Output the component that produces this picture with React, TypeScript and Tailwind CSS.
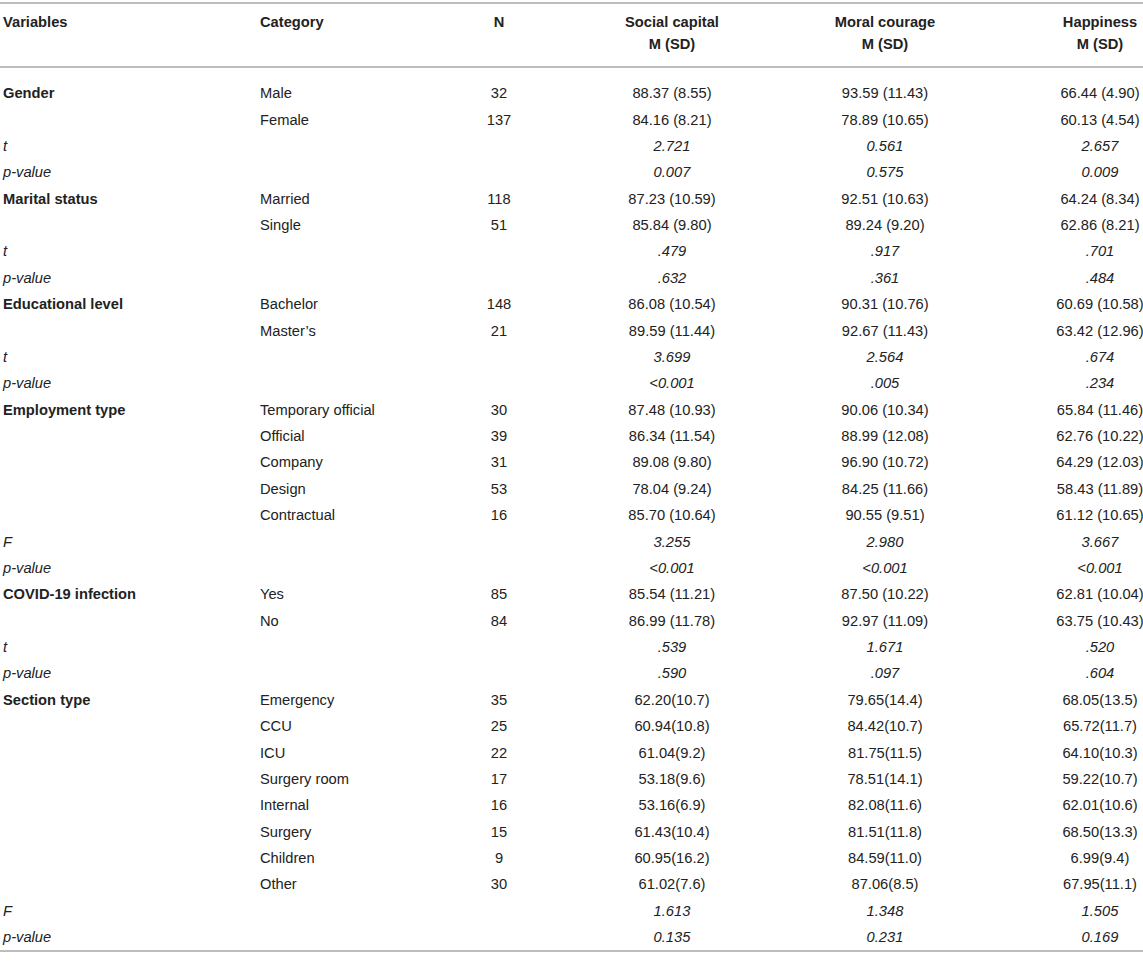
const rows: {
  v?: string
  c?: string
  n?: string
  a: string
  b: string
  h: string
  stat?: boolean
}[] = [
  { v: 'Gender', c: 'Male', n: '32', a: '88.37 (8.55)', b: '93.59 (11.43)', h: '66.44 (4.90)' },
  { c: 'Female', n: '137', a: '84.16 (8.21)', b: '78.89 (10.65)', h: '60.13 (4.54)' },
  { v: 't', stat: true, a: '2.721', b: '0.561', h: '2.657' },
  { v: 'p-value', stat: true, a: '0.007', b: '0.575', h: '0.009' },
  { v: 'Marital status', c: 'Married', n: '118', a: '87.23 (10.59)', b: '92.51 (10.63)', h: '64.24 (8.34)' },
  { c: 'Single', n: '51', a: '85.84 (9.80)', b: '89.24 (9.20)', h: '62.86 (8.21)' },
  { v: 't', stat: true, a: '.479', b: '.917', h: '.701' },
  { v: 'p-value', stat: true, a: '.632', b: '.361', h: '.484' },
  { v: 'Educational level', c: 'Bachelor', n: '148', a: '86.08 (10.54)', b: '90.31 (10.76)', h: '60.69 (10.58)' },
  { c: 'Master’s', n: '21', a: '89.59 (11.44)', b: '92.67 (11.43)', h: '63.42 (12.96)' },
  { v: 't', stat: true, a: '3.699', b: '2.564', h: '.674' },
  { v: 'p-value', stat: true, a: '<0.001', b: '.005', h: '.234' },
  { v: 'Employment type', c: 'Temporary official', n: '30', a: '87.48 (10.93)', b: '90.06 (10.34)', h: '65.84 (11.46)' },
  { c: 'Official', n: '39', a: '86.34 (11.54)', b: '88.99 (12.08)', h: '62.76 (10.22)' },
  { c: 'Company', n: '31', a: '89.08 (9.80)', b: '96.90 (10.72)', h: '64.29 (12.03)' },
  { c: 'Design', n: '53', a: '78.04 (9.24)', b: '84.25 (11.66)', h: '58.43 (11.89)' },
  { c: 'Contractual', n: '16', a: '85.70 (10.64)', b: '90.55 (9.51)', h: '61.12 (10.65)' },
  { v: 'F', stat: true, a: '3.255', b: '2.980', h: '3.667' },
  { v: 'p-value', stat: true, a: '<0.001', b: '<0.001', h: '<0.001' },
  { v: 'COVID-19 infection', c: 'Yes', n: '85', a: '85.54 (11.21)', b: '87.50 (10.22)', h: '62.81 (10.04)' },
  { c: 'No', n: '84', a: '86.99 (11.78)', b: '92.97 (11.09)', h: '63.75 (10.43)' },
  { v: 't', stat: true, a: '.539', b: '1.671', h: '.520' },
  { v: 'p-value', stat: true, a: '.590', b: '.097', h: '.604' },
  { v: 'Section type', c: 'Emergency', n: '35', a: '62.20(10.7)', b: '79.65(14.4)', h: '68.05(13.5)' },
  { c: 'CCU', n: '25', a: '60.94(10.8)', b: '84.42(10.7)', h: '65.72(11.7)' },
  { c: 'ICU', n: '22', a: '61.04(9.2)', b: '81.75(11.5)', h: '64.10(10.3)' },
  { c: 'Surgery room', n: '17', a: '53.18(9.6)', b: '78.51(14.1)', h: '59.22(10.7)' },
  { c: 'Internal', n: '16', a: '53.16(6.9)', b: '82.08(11.6)', h: '62.01(10.6)' },
  { c: 'Surgery', n: '15', a: '61.43(10.4)', b: '81.51(11.8)', h: '68.50(13.3)' },
  { c: 'Children', n: '9', a: '60.95(16.2)', b: '84.59(11.0)', h: '6.99(9.4)' },
  { c: 'Other', n: '30', a: '61.02(7.6)', b: '87.06(8.5)', h: '67.95(11.1)' },
  { v: 'F', stat: true, a: '1.613', b: '1.348', h: '1.505' },
  { v: 'p-value', stat: true, a: '0.135', b: '0.231', h: '0.169' },
]

const cols = 'grid grid-cols-[257px_180px_118px_228px_198px_232px] pl-[3px]'

export default function App() {
  return (
    <div className="w-[1143px] overflow-hidden bg-white pt-[2px] text-[14.7px] text-[#222] font-['Liberation_Sans',Arial,sans-serif]">
      <div className="h-[2px] bg-[#bdbdbd]" />

      {/* header */}
      <div className={`${cols} pt-[7px] pb-[11px] font-bold leading-[22px]`}>
        <div>Variables</div>
        <div>Category</div>
        <div className="text-center">N</div>
        <div className="text-center">
          Social capital
          <br />M (SD)
        </div>
        <div className="text-center">
          Moral courage
          <br />M (SD)
        </div>
        <div className="text-center">
          Happiness
          <br />M (SD)
        </div>
      </div>
      <div className="h-[2px] bg-[#bdbdbd]" />

      <div className="pt-[12px]">
        {rows.map((r, i) => (
          <div key={i} className={`${cols} h-[26.375px] items-center`}>
            <div className={r.stat ? 'italic' : 'font-bold'}>{r.v}</div>
            <div>{r.c}</div>
            <div className="text-center">{r.n}</div>
            <div className={`text-center ${r.stat ? 'italic' : ''}`}>{r.a}</div>
            <div className={`text-center ${r.stat ? 'italic' : ''}`}>{r.b}</div>
            <div className={`text-center ${r.stat ? 'italic' : ''}`}>{r.h}</div>
          </div>
        ))}
      </div>
      <div className="h-[2px] bg-[#bdbdbd]" />
    </div>
  )
}
